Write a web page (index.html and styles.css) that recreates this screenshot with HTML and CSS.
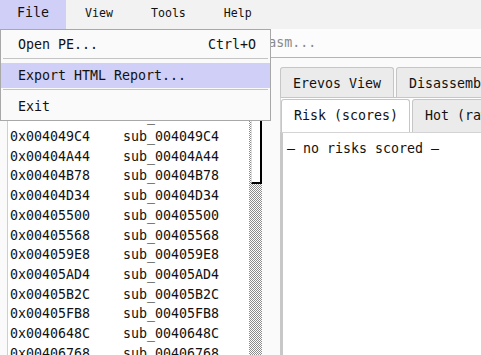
FILE: index.html
```html
<!DOCTYPE html>
<html lang="en">
<head>
    <meta charset="UTF-8">
    <meta name="viewport" content="width=device-width, initial-scale=1.0">
    <title>Erevos</title>
    <link rel="stylesheet" href="styles.css">
</head>
<body>
    <div class="menubar">
        <div class="menu-item menu-open">File</div>
        <div class="menu-item">View</div>
        <div class="menu-item">Tools</div>
        <div class="menu-item">Help</div>
    </div>

    <!-- File menu (open) -->
    <div class="dropdown">
        <div class="dd-item dd-first"><span>Open PE...</span><span>Ctrl+O</span></div>
        <div class="dd-sep"></div>
        <div class="dd-item dd-active"><span>Export HTML Report...</span></div>
        <div class="dd-sep"></div>
        <div class="dd-item dd-last"><span>Exit</span></div>
    </div>

    <div class="searchbar">
        <div class="search-entry">Search name, address or disasm...</div>
    </div>

    <div class="main">
        <div class="func-panel">
            <div class="func-list">
                <div class="row"><span class="addr">0x00401000</span><span>sub_00401000</span></div>
                <div class="row"><span class="addr">0x004012A0</span><span>sub_004012A0</span></div>
                <div class="row"><span class="addr">0x00403F10</span><span>sub_00403F10</span></div>
                <div class="row"><span class="addr">0x004049C4</span><span>sub_004049C4</span></div>
                <div class="row"><span class="addr">0x00404A44</span><span>sub_00404A44</span></div>
                <div class="row"><span class="addr">0x00404B78</span><span>sub_00404B78</span></div>
                <div class="row"><span class="addr">0x00404D34</span><span>sub_00404D34</span></div>
                <div class="row"><span class="addr">0x00405500</span><span>sub_00405500</span></div>
                <div class="row"><span class="addr">0x00405568</span><span>sub_00405568</span></div>
                <div class="row"><span class="addr">0x004059E8</span><span>sub_004059E8</span></div>
                <div class="row"><span class="addr">0x00405AD4</span><span>sub_00405AD4</span></div>
                <div class="row"><span class="addr">0x00405B2C</span><span>sub_00405B2C</span></div>
                <div class="row"><span class="addr">0x00405FB8</span><span>sub_00405FB8</span></div>
                <div class="row"><span class="addr">0x0040648C</span><span>sub_0040648C</span></div>
                <div class="row"><span class="addr">0x00406768</span><span>sub_00406768</span></div>
            </div>
            <div class="scrollbar">
                <div class="thumb"></div>
            </div>
        </div>

        <div class="view-panel">
            <div class="tabs">
                <div class="tab">Erevos View</div>
                <div class="tab">Disassembly</div>
            </div>
            <div class="pane">
                <div class="tabs inner-tabs">
                    <div class="tab tab-selected">Risk (scores)</div>
                    <div class="tab">Hot (raw)</div>
                </div>
                <div class="pane-body">— no risks scored —</div>
            </div>
        </div>
    </div>
</body>
</html>
```

FILE: styles.css
```css
body {
    margin: 0;
    height: 355px;
    overflow: hidden;
    background-color: #fafafa;
    font-family: "DejaVu Sans Mono", monospace;
    font-size: 13.3px;
    color: #111;
    display: flex;
    flex-direction: column;
}
.menubar {
    height: 29px;
    display: flex;
    background-color: #f2f2f2;
}
.menu-item {
    padding: 0 19px;
    line-height: 27px;
    font-size: 11.6px;
}
.menu-open {
    padding: 0 17px;
    font-size: 13.3px;
    line-height: 26px;
    background-color: #cfcff7;
}
.dropdown {
    position: absolute;
    top: 29px;
    left: 0;
    width: 269px;
    padding-top: 1px;
    background-color: #fafafa;
    border: 1px solid #a8a8a8;
    z-index: 10;
}
.dd-item {
    display: flex;
    justify-content: space-between;
    height: 25px;
    line-height: 25px;
    padding: 0 14px 0 17px;
}
.dd-first {
    height: 26px;
    line-height: 27px;
}
.dd-last {
    height: 26px;
    line-height: 26px;
}
.dd-active {
    background-color: #cfcff7;
}
.dd-sep {
    margin: 1px 2px 0;
    height: 4px;
    border-top: 1px solid #c4c4c4;
}
.searchbar {
    height: 28px;
    border-bottom: 1px solid #b4b4b4;
    background-color: #fcfcfc;
    display: flex;
}
.search-entry {
    padding-left: 52px;
    line-height: 28px;
    color: #8a8a8a;
    white-space: nowrap;
}
.main {
    flex: 1;
    display: flex;
    padding: 9px 0 0 7px;
    min-height: 0;
}
.func-panel {
    display: flex;
    width: 255px;
    margin-right: 18px;
    background-color: #fff;
}
.func-list {
    flex: 1;
    border-left: 1px solid #cfcfcf;
    border-top: 1px solid #cfcfcf;
    padding: 0 0 0 2px;
    overflow: hidden;
}
.row {
    display: flex;
    height: 19.7px;
    line-height: 19.7px;
    white-space: nowrap;
}
.addr {
    width: 113px;
}
.scrollbar {
    width: 13px;
    border-top: 1px solid #cfcfcf;
    background: repeating-conic-gradient(#8c8c8c 0 25%, #ffffff 0 50%) 0 0 / 2px 2px;
}
.thumb {
    height: 114px;
    margin-left: 2px;
    background-color: #fff;
    border-left: 1px solid #dcdcdc;
    border-right: 2px solid #000;
    border-bottom: 2px solid #000;
}
.view-panel {
    flex: 1;
    display: flex;
    flex-direction: column;
    min-width: 0;
    overflow: hidden;
    background-color: #fff;
}
.tabs {
    display: flex;
    gap: 2px;
    white-space: nowrap;
    background-color: #fafafa;
}
.tab {
    height: 29px;
    line-height: 31px;
    padding: 0 12px;
    background-color: #ebebeb;
    border: 1px solid #c6c6c6;
    border-bottom: none;
    border-radius: 3px 3px 0 0;
    flex-shrink: 0;
}
.pane {
    flex: 1;
    display: flex;
    flex-direction: column;
    border-top: 1px solid #c6c6c6;
    border-left: 1px solid #d4d4d4;
    padding-top: 1px;
}
.inner-tabs {
    background-color: #fff;
}
.inner-tabs .tab {
    height: 32px;
    line-height: 32px;
    padding: 0 11px 0 12px;
}
.tab-selected {
    background-color: #fff;
}
.pane-body {
    flex: 1;
    margin-left: -1px;
    border-left: 3px solid #c8c8c8;
    border-top: 1px solid #d4d4d4;
    padding: 8px 0 0 4px;
    background-color: #fff;
}
```
